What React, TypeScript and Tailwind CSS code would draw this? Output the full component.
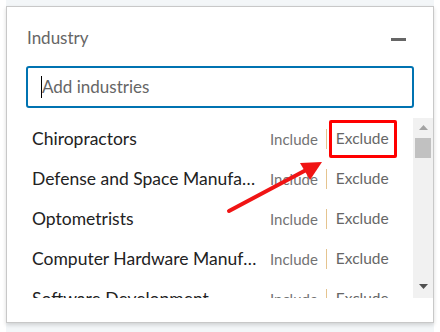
const rows = [
  "Chiropractors",
  "Defense and Space Manufacturing",
  "Optometrists",
  "Computer Hardware Manufacturing",
  "Software Development",
];

export default function App() {
  return (
    <div className="relative h-[332px] w-[440px] overflow-hidden bg-white" style={{ fontFamily: '"Segoe UI", Lato, "Open Sans", sans-serif' }}>
      <div className="ml-[6px] flex h-[332px] w-[428px] flex-col bg-[#f3f6f8]">
        <div className="h-[6px] shrink-0" />
        <div className="flex h-[317px] flex-col border border-[#c8c8c8] bg-white shadow-[0_2px_4px_rgba(0,0,0,0.15)]">
          <div className="flex h-[59px] items-end justify-between pb-[17px] pl-[20px] pr-[27px]">
            <span className="text-[17px] leading-[22px] text-[#666]">Industry</span>
            <span className="mb-[8px] h-[3px] w-[15px] bg-[#666]" />
          </div>
          <div className="mx-[19px] flex h-[42px] items-center rounded-[3px] border-2 border-[#0073b1] pl-[13px]">
            <span className="h-[22px] w-px bg-black" />
            <span className="text-[17px] text-[#666]">Add industries</span>
          </div>
          <div className="mt-[10px] flex h-[180px]">
            <div className="flex-1 overflow-hidden pt-[1px]">
              {rows.map((r) => (
                <div key={r} className="flex h-[40px] items-center pl-[25px]">
                  <span className="w-[226px] truncate text-[17.5px] text-[#222]">{r}</span>
                  <span className="ml-[12px] text-[15px] text-[#737373]">Include</span>
                  <span className="ml-[8px] mr-[9px] h-[20px] w-px bg-[#e5c48f]" />
                  <span className="text-[15.5px] text-[#666]">Exclude</span>
                </div>
              ))}
            </div>
            <div className="flex w-[20px] flex-col items-center bg-[#f1f1f1] pt-[7px]">
              <svg width="9" height="5" viewBox="0 0 9 5"><path d="M0 5 L4.5 0 L9 5 Z" fill="#a3a3a3" /></svg>
              <div className="mt-[8px] h-[20px] w-[16px] bg-[#c1c1c1]" />
              <div className="flex-1" />
              <svg className="mb-[9px]" width="9" height="5" viewBox="0 0 9 5"><path d="M0 0 L4.5 5 L9 0 Z" fill="#505050" /></svg>
            </div>
          </div>
        </div>
      </div>
      <div className="absolute left-[329px] top-[120px] h-[38px] w-[68px] rounded-[2px] border-[3px] border-[#ff0000]" />
      <svg className="absolute left-0 top-0" width="440" height="332" viewBox="0 0 440 332">
        <line x1="229" y1="211" x2="308" y2="169" stroke="#f01414" strokeWidth="4" strokeLinecap="round" />
        <path d="M322 162 L300 163 L310 180 Z" fill="#f01414" />
      </svg>
    </div>
  );
}
